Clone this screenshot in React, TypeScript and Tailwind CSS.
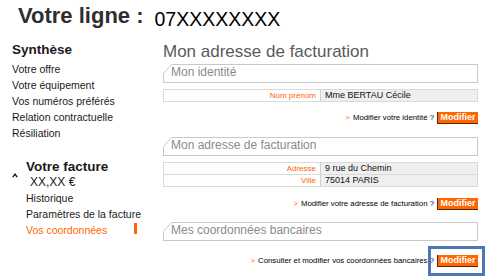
import React from "react";

const ORANGE = "text-[#ff6600]";

const SectionBox = ({ title }: { title: string }) => (
  <div className="relative h-[19px] border border-[#c9c9c9] pl-[7px] text-[12px] leading-[14px] text-[#8a8a8a]">
    <svg className="absolute left-[-1px] top-[-1px]" width="9" height="10" viewBox="0 0 9 10">
      <polygon points="0,0 9,0 0,10" fill="#fff" />
      <line x1="0.5" y1="9.5" x2="8.5" y2="0.5" stroke="#c9c9c9" strokeWidth="1" />
    </svg>
    {title}
  </div>
);

const InfoTable = ({ rows }: { rows: [string, string][] }) => (
  <div className="border border-[#dadada]">
    {rows.map(([label, value], i) => (
      <div
        key={label}
        className={`grid grid-cols-[156px_1fr] h-[11px] ${i > 0 ? "border-t border-[#dadada]" : ""} box-content`}
      >
        <div className={`text-right pr-[4px] text-[8px] leading-[11px] ${ORANGE}`}>{label}</div>
        <div className="bg-[#efefef] border-l border-[#d0d0d0] pl-[4px] text-[9px] leading-[11px] text-[#111]">
          {value}
        </div>
      </div>
    ))}
  </div>
);

const ActionRow = ({ text }: { text: string }) => (
  <div className="flex justify-end items-center gap-[3px]">
    <span className={`text-[7.5px] leading-[12px] ${ORANGE}`}>&gt;</span>
    <span className="text-[7.8px] leading-[12px] text-black">{text}</span>
    <button className="w-[41px] h-[12px] bg-[#ff6600] border-l border-b border-[#5a2500] text-white font-bold text-[9px] leading-[11px]">
      Modifier
    </button>
  </div>
);

export default function App() {
  return (
    <div className="relative w-[492px] h-[277px] bg-white overflow-hidden font-['Liberation_Sans',Arial,sans-serif]">
      <div className="h-[40px] flex items-start pl-[18px]">
        <span className="mt-[5px] text-[22px] leading-[22px] font-bold text-[#2e2e2e]">Votre ligne :</span>
        <span className="mt-[10px] ml-[11px] text-[19.5px] leading-[19px] text-black">07XXXXXXXX</span>
      </div>

      <div className="flex">
        <div className="w-[163px] pl-[12px] text-[#1a1a1a]">
          <div className="mt-[2px] text-[13.5px] leading-[16px] font-bold">Synthèse</div>
          <div className="mt-[3px] text-[10.5px] leading-[16px]">
            <div>Votre offre</div>
            <div>Votre équipement</div>
            <div>Vos numéros préférés</div>
            <div>Relation contractuelle</div>
            <div>Résiliation</div>
          </div>

          <div className="mt-[18px] flex">
            <div className="w-[14px] pt-[14px]">
              <svg width="6" height="5" viewBox="0 0 6 5">
                <polyline points="0.8,4.2 3,1.2 5.2,4.2" fill="none" stroke="#111" strokeWidth="1.4" />
              </svg>
            </div>
            <div>
              <div className="text-[13.5px] leading-[16px] font-bold">Votre facture</div>
              <div className="ml-[4px] text-[12px] leading-[14px]">XX,XX €</div>
              <div className="mt-[0.5px] text-[10.5px] leading-[16px]">
                <div>Historique</div>
                <div>Paramètres de la facture</div>
                <div className="flex justify-between w-[111px]">
                  <span className={`${ORANGE}`}>Vos coordonnées</span>
                  <span className="mt-[1px] w-[3px] h-[11px] bg-[#ff6600]" />
                </div>
              </div>
            </div>
          </div>
        </div>

        <div className="w-[315px]">
          <div className="mt-[2px] text-[17px] leading-[20px] text-[#5a5a5a]">Mon adresse de facturation</div>

          <div className="mt-[2px]">
            <SectionBox title="Mon identité" />
          </div>
          <div className="mt-[6px]">
            <InfoTable rows={[["Nom prénom", "Mme BERTAU Cécile"]]} />
          </div>
          <div className="mt-[10px]">
            <ActionRow text="Modifier votre identité ?" />
          </div>

          <div className="mt-[13px]">
            <SectionBox title="Mon adresse de facturation" />
          </div>
          <div className="mt-[6px]">
            <InfoTable
              rows={[
                ["Adresse", "9 rue du Chemin"],
                ["Ville", "75014 PARIS"],
              ]}
            />
          </div>
          <div className="mt-[11px]">
            <ActionRow text="Modifier votre adresse de facturation ?" />
          </div>

          <div className="mt-[12px]">
            <SectionBox title="Mes coordonnées bancaires" />
          </div>
          <div className="mt-[14px]">
            <ActionRow text="Consulter et modifier vos coordonnées bancaires ?" />
          </div>
        </div>
      </div>

      <div className="absolute left-[428px] top-[246px] w-[57px] h-[30px] border-[3px] border-[#4f77b5]" />
    </div>
  );
}
